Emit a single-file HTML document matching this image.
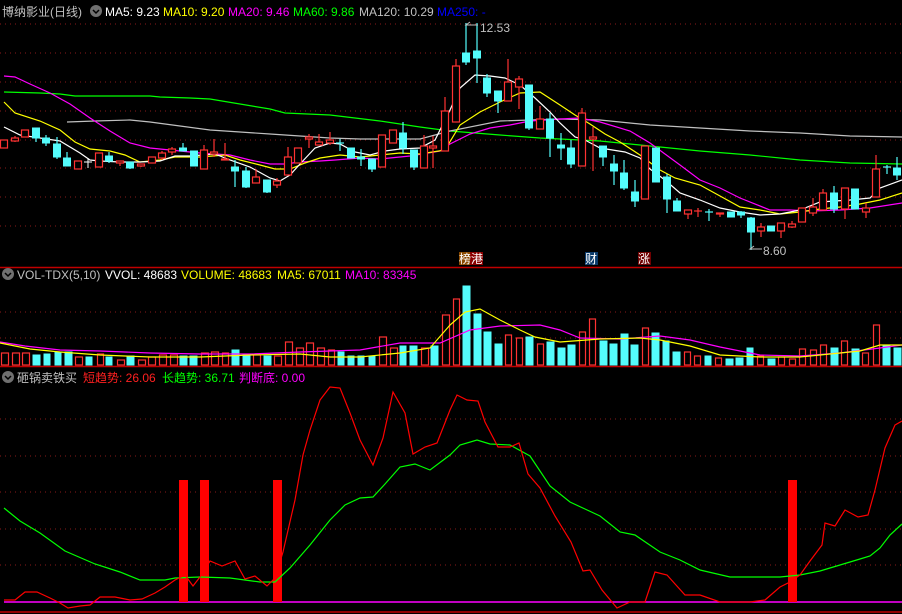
<!DOCTYPE html>
<html><head><meta charset="utf-8"><style>
html,body{margin:0;padding:0;background:#000;}
svg{display:block;}
text{font-family:"Liberation Sans","Noto Sans CJK SC",sans-serif;font-size:12px;}
.r{fill:#000;stroke:#ff3232;stroke-width:1.2}
.c{fill:#54fcfc;stroke:#54fcfc;stroke-width:1}
.wr{stroke:#ff3232;stroke-width:1.2}
.wc{stroke:#54fcfc;stroke-width:1.2}
.dot{stroke:#8a1a1a;stroke-width:1;stroke-dasharray:1 4}
</style></head><body>
<svg width="902" height="614" viewBox="0 0 902 614" xmlns="http://www.w3.org/2000/svg">
<rect width="902" height="614" fill="#000"/>
<!-- grid -->
<g class="dot">
<line x1="0" y1="24" x2="902" y2="24"/><line x1="0" y1="53" x2="902" y2="53"/><line x1="0" y1="82" x2="902" y2="82"/><line x1="0" y1="111" x2="902" y2="111"/><line x1="0" y1="140" x2="902" y2="140"/><line x1="0" y1="168" x2="902" y2="168"/><line x1="0" y1="197" x2="902" y2="197"/><line x1="0" y1="226" x2="902" y2="226"/>
<line x1="0" y1="312" x2="902" y2="312"/><line x1="0" y1="338" x2="902" y2="338"/>
<line x1="0" y1="419" x2="902" y2="419"/><line x1="0" y1="456" x2="902" y2="456"/><line x1="0" y1="492" x2="902" y2="492"/><line x1="0" y1="529" x2="902" y2="529"/><line x1="0" y1="565" x2="902" y2="565"/>
</g>
<line x1="0" y1="267.5" x2="902" y2="267.5" stroke="#c00000" stroke-width="1.5"/>
<line x1="0" y1="366.5" x2="902" y2="366.5" stroke="#c00000" stroke-width="1.5"/>
<line x1="0" y1="612" x2="902" y2="612" stroke="#c00000" stroke-width="1.5"/>

<!-- MA lines -->
<g fill="none" stroke-width="1.2">
<polyline stroke="#00ff00" points="4,92 40,93 60,94 75,96 100,96 150,96 160,97 190,98 210,99 240,104 270,109 285,113 330,115 380,121 420,127 450,131 500,135 540,138 600,141 630,144 700,151 750,155 800,160 850,163 902,164"/>
<polyline stroke="#c0c0c0" points="67,122 95,121 130,120 150,122 180,126 210,130 240,132 270,134 300,136 330,138 360,139 390,139 420,139 450,131 500,121 560,119 600,120 650,125 700,128 750,131 800,133 850,136 902,137"/>
<polyline stroke="#ff00ff" points="4,76 15,77 30,84 50,93 70,104 90,118 110,131 130,143 150,148 170,150 200,153 230,155 250,160 270,164 285,164 300,162 320,161 335,160 360,158 380,159 410,156 440,151 450,144 470,134 490,128 510,125 530,121 560,119 580,118 600,122 630,131 650,143 680,165 700,180 720,188 740,198 770,210 790,210 810,211 840,210 870,208 902,203"/>
<polyline stroke="#ffff00" points="4,102 15,113 40,121 60,130 75,142 90,149 110,151 125,155 140,162 160,160 175,157 200,157 225,155 240,160 260,165 275,169 290,169 305,163 320,158 340,155 360,157 380,155 400,153 420,154 445,150 460,125 480,112 500,102 520,93 540,92 560,105 575,115 590,124 605,134 620,142 640,155 660,170 675,178 700,185 720,196 740,207 760,210 780,214 800,212 820,209 840,207 860,204 880,200 902,193"/>
<polyline stroke="#ffffff" points="4,127 20,135 40,138 60,141 80,153 90,160 100,161 120,162 140,162 160,161 175,156 190,156 215,154 230,160 250,167 270,178 280,181 290,175 300,164 315,148 330,143 340,144 355,152 370,155 385,151 400,149 420,148 435,140 450,110 460,88 475,75 490,76 505,78 520,85 535,98 550,112 560,123 575,137 585,140 600,148 625,152 640,158 650,169 665,180 680,193 700,200 720,208 740,212 760,215 780,214 800,210 820,202 835,201 850,200 870,198 880,188 902,180"/>
</g>

<!-- candles -->
<g>
<rect class="r" x="0.5" y="140" width="7" height="8"/>
<line class="wr" x1="15" y1="136" x2="15" y2="142"/><rect class="r" x="11.5" y="138" width="7" height="3"/>
<rect class="r" x="21.5" y="130" width="7" height="7"/>
<line class="wc" x1="36" y1="128" x2="36" y2="142"/><rect class="c" x="32.5" y="128" width="7" height="10"/>
<line class="wc" x1="46" y1="135" x2="46" y2="146"/><rect class="c" x="42.5" y="138" width="7" height="5"/>
<line class="wc" x1="57" y1="137" x2="57" y2="159"/><rect class="c" x="53.5" y="144" width="7" height="13"/>
<line class="wc" x1="67" y1="152" x2="67" y2="166"/><rect class="c" x="63.5" y="158" width="7" height="8"/>
<rect class="r" x="74.5" y="161" width="7" height="8"/>
<line stroke="#fff" x1="88" y1="158" x2="88" y2="168"/><line stroke="#fff" x1="84" y1="162" x2="92" y2="162"/>
<rect class="r" x="95.5" y="153" width="7" height="14"/>
<line class="wc" x1="109" y1="152" x2="109" y2="163"/><rect class="c" x="105.5" y="156" width="7" height="5"/>
<line class="wr" x1="120" y1="161" x2="120" y2="166"/><rect class="r" x="116.5" y="161" width="7" height="2"/>
<line class="wc" x1="130" y1="162" x2="130" y2="169"/><rect class="c" x="126.5" y="162" width="7" height="6"/>
<line class="wr" x1="141" y1="164" x2="141" y2="167"/><rect class="r" x="137.5" y="164" width="7" height="2"/>
<rect class="r" x="148.5" y="157" width="7" height="6"/>
<line class="wr" x1="162" y1="151" x2="162" y2="160"/><rect class="r" x="158.5" y="153" width="7" height="5"/>
<line class="wr" x1="172" y1="147" x2="172" y2="155"/><rect class="r" x="168.5" y="149" width="7" height="3"/>
<line class="wc" x1="183" y1="143" x2="183" y2="151"/><rect class="c" x="179.5" y="148" width="7" height="3"/>
<rect class="c" x="190.5" y="151" width="7" height="15"/>
<line class="wr" x1="204" y1="145" x2="204" y2="169"/><rect class="r" x="200.5" y="150" width="7" height="19"/>
<line class="wr" x1="214" y1="139" x2="214" y2="157"/><rect class="r" x="210.5" y="152" width="7" height="2"/>
<line class="wr" x1="225" y1="143" x2="225" y2="160"/><rect class="r" x="221.5" y="159" width="7" height="1"/>
<line class="wc" x1="235" y1="160" x2="235" y2="187"/><rect class="c" x="231.5" y="167" width="7" height="4"/>
<line class="wc" x1="246" y1="167" x2="246" y2="188"/><rect class="c" x="242.5" y="171" width="7" height="16"/>
<line class="wr" x1="256" y1="169" x2="256" y2="183"/><rect class="r" x="252.5" y="177" width="7" height="6"/>
<line class="wc" x1="267" y1="180" x2="267" y2="193"/><rect class="c" x="263.5" y="180" width="7" height="12"/>
<line class="wr" x1="277" y1="178" x2="277" y2="188"/><rect class="r" x="273.5" y="181" width="7" height="4"/>
<line class="wr" x1="288" y1="147" x2="288" y2="175"/><rect class="r" x="284.5" y="157" width="7" height="18"/>
<rect class="r" x="294.5" y="148" width="7" height="15"/>
<line class="wr" x1="309" y1="134" x2="309" y2="148"/><rect class="r" x="305.5" y="137" width="7" height="2"/>
<line class="wr" x1="319" y1="134" x2="319" y2="145"/><rect class="r" x="315.5" y="142" width="7" height="3"/>
<line class="wr" x1="330" y1="132" x2="330" y2="145"/><rect class="r" x="326.5" y="140" width="7" height="3"/>
<line class="wc" x1="340" y1="139" x2="340" y2="151"/><line class="wc" x1="336" y1="143" x2="344" y2="143"/>
<rect class="c" x="347.5" y="148" width="7" height="10"/>
<line class="wc" x1="361" y1="149" x2="361" y2="166"/><rect class="c" x="357.5" y="157" width="7" height="2"/>
<line class="wc" x1="372" y1="159" x2="372" y2="172"/><rect class="c" x="368.5" y="159" width="7" height="10"/>
<rect class="r" x="378.5" y="135" width="7" height="32"/>
<rect class="r" x="389.5" y="130" width="7" height="13"/>
<line class="wc" x1="403" y1="122" x2="403" y2="154"/><rect class="c" x="399.5" y="133" width="7" height="15"/>
<line class="wc" x1="414" y1="150" x2="414" y2="170"/><rect class="c" x="410.5" y="150" width="7" height="17"/>
<line class="wr" x1="424" y1="135" x2="424" y2="168"/><rect class="r" x="420.5" y="146" width="7" height="22"/>
<line class="wr" x1="433" y1="136" x2="433" y2="168"/><rect class="r" x="429.5" y="146" width="7" height="2"/>
<line class="wr" x1="445" y1="97" x2="445" y2="151"/><rect class="r" x="441.5" y="111" width="7" height="40"/>
<line class="wr" x1="456" y1="59" x2="456" y2="122"/><rect class="r" x="452.5" y="66" width="7" height="56"/>
<line class="wc" x1="466" y1="23" x2="466" y2="65"/><rect class="c" x="462.5" y="53" width="7" height="9"/>
<line class="wc" x1="477" y1="23" x2="477" y2="83"/><rect class="c" x="473.5" y="51" width="7" height="7"/>
<line class="wc" x1="487" y1="74" x2="487" y2="97"/><rect class="c" x="483.5" y="78" width="7" height="15"/>
<line class="wc" x1="498" y1="91" x2="498" y2="113"/><rect class="c" x="494.5" y="91" width="7" height="10"/>
<line class="wr" x1="508" y1="59" x2="508" y2="101"/><rect class="r" x="504.5" y="82" width="7" height="19"/>
<line class="wr" x1="519" y1="76" x2="519" y2="109"/><rect class="r" x="515.5" y="79" width="7" height="8"/>
<line class="wc" x1="529" y1="85" x2="529" y2="130"/><rect class="c" x="525.5" y="85" width="7" height="43"/>
<line class="wr" x1="540" y1="106" x2="540" y2="129"/><rect class="r" x="536.5" y="119" width="7" height="10"/>
<line class="wc" x1="550" y1="113" x2="550" y2="157"/><rect class="c" x="546.5" y="119" width="7" height="19"/>
<line class="wc" x1="561" y1="133" x2="561" y2="160"/><rect class="c" x="557.5" y="145" width="7" height="3"/>
<line class="wc" x1="571" y1="140" x2="571" y2="168"/><rect class="c" x="567.5" y="148" width="7" height="16"/>
<line class="wr" x1="582" y1="108" x2="582" y2="166"/><rect class="r" x="578.5" y="113" width="7" height="53"/>
<line class="wr" x1="593" y1="127" x2="593" y2="171"/><rect class="r" x="589.5" y="137" width="7" height="2"/>
<line class="wc" x1="603" y1="146" x2="603" y2="166"/><rect class="c" x="599.5" y="146" width="7" height="11"/>
<line class="wc" x1="614" y1="155" x2="614" y2="185"/><rect class="c" x="610.5" y="164" width="7" height="7"/>
<line class="wc" x1="624" y1="160" x2="624" y2="190"/><rect class="c" x="620.5" y="173" width="7" height="15"/>
<line class="wc" x1="635" y1="180" x2="635" y2="207"/><rect class="c" x="631.5" y="192" width="7" height="9"/>
<rect class="r" x="641.5" y="146" width="7" height="53"/>
<rect class="c" x="652.5" y="148" width="7" height="34"/>
<line class="wc" x1="667" y1="174" x2="667" y2="213"/><rect class="c" x="663.5" y="177" width="7" height="22"/>
<line class="wc" x1="677" y1="198" x2="677" y2="211"/><rect class="c" x="673.5" y="201" width="7" height="10"/>
<line class="wr" x1="688" y1="210" x2="688" y2="219"/><rect class="r" x="684.5" y="210" width="7" height="4"/>
<line class="wr" x1="698" y1="208" x2="698" y2="217"/><line class="wr" x1="694" y1="211" x2="702" y2="211"/>
<line class="wc" x1="709" y1="209" x2="709" y2="221"/><line class="wc" x1="705" y1="212" x2="713" y2="212"/>
<line class="wr" x1="720" y1="213" x2="720" y2="217"/><rect class="r" x="716.5" y="213" width="7" height="1"/>
<rect class="c" x="727.5" y="212" width="7" height="5"/>
<line class="wc" x1="741" y1="211" x2="741" y2="218"/><rect class="c" x="737.5" y="212" width="7" height="3"/>
<line class="wc" x1="751" y1="217" x2="751" y2="250"/><rect class="c" x="747.5" y="218" width="7" height="14"/>
<line class="wr" x1="761" y1="223" x2="761" y2="237"/><rect class="r" x="757.5" y="227" width="7" height="4"/>
<rect class="c" x="767.5" y="226" width="7" height="5"/>
<line class="wr" x1="781" y1="223" x2="781" y2="238"/><rect class="r" x="777.5" y="223" width="7" height="8"/>
<line class="wr" x1="792" y1="221" x2="792" y2="228"/><rect class="r" x="788.5" y="224" width="7" height="3"/>
<rect class="r" x="798.5" y="208" width="7" height="14"/>
<line class="wr" x1="813" y1="198" x2="813" y2="216"/><rect class="r" x="809.5" y="207" width="7" height="6"/>
<line class="wr" x1="823" y1="189" x2="823" y2="210"/><rect class="r" x="819.5" y="193" width="7" height="17"/>
<line class="wc" x1="834" y1="186" x2="834" y2="213"/><rect class="c" x="830.5" y="193" width="7" height="16"/>
<line class="wr" x1="845" y1="188" x2="845" y2="219"/><rect class="r" x="841.5" y="188" width="7" height="21"/>
<rect class="c" x="851.5" y="189" width="7" height="20"/>
<line class="wr" x1="866" y1="203" x2="866" y2="218"/><rect class="r" x="862.5" y="208" width="7" height="4"/>
<line class="wr" x1="876" y1="155" x2="876" y2="197"/><rect class="r" x="872.5" y="169" width="7" height="28"/>
<line class="wc" x1="887" y1="165" x2="887" y2="174"/><line class="wc" x1="883" y1="167" x2="891" y2="167"/>
<line class="wc" x1="897" y1="157" x2="897" y2="180"/><rect class="c" x="893.5" y="168" width="7" height="7"/>
</g>

<!-- price labels -->
<path d="M470 22 L466 25 L478 25" stroke="#c0c0c0" fill="none"/>
<text x="480" y="32" fill="#c0c0c0">12.53</text>
<path d="M754 246 L750 249 L762 249" stroke="#c0c0c0" fill="none"/>
<text x="763" y="255" fill="#c0c0c0">8.60</text>
<rect x="459" y="252" width="11" height="13" fill="#8a4a00"/><rect x="470" y="252" width="13" height="13" fill="#8a0000"/>
<text x="459" y="263" fill="#fff" font-size="11">榜港</text>
<rect x="585" y="252" width="13" height="13" fill="#0a3a6a"/><text x="585" y="263" fill="#fff" font-size="11">财</text>
<rect x="638" y="252" width="13" height="13" fill="#700000"/><text x="638" y="263" fill="#fff" font-size="11">涨</text>

<!-- header -->
<text x="2" y="16" fill="#c0c0c0" font-size="13">博纳影业(日线)</text>
<circle cx="96" cy="11" r="6" fill="#707070"/><path d="M93 10 L96 13 L99 10" stroke="#000" stroke-width="1.5" fill="none"/>
<text x="105" y="16" fill="#fff">MA5: 9.23</text>
<text x="163" y="16" fill="#ffff00">MA10: 9.20</text>
<text x="228" y="16" fill="#ff00ff">MA20: 9.46</text>
<text x="293" y="16" fill="#00ff00">MA60: 9.86</text>
<text x="359" y="16" fill="#c0c0c0">MA120: 10.29</text>
<text x="437" y="16" fill="#0000ff">MA250: -</text>

<!-- volume -->
<text x="17" y="279" fill="#c0c0c0">VOL-TDX(5,10)</text>
<circle cx="8" cy="274" r="6" fill="#707070"/><path d="M5 273 L8 276 L11 273" stroke="#000" stroke-width="1.5" fill="none"/>
<text x="105" y="279" fill="#fff">VVOL: 48683</text>
<text x="181" y="279" fill="#ffff00">VOLUME: 48683</text>
<text x="277" y="279" fill="#ffff00">MA5: 67011</text>
<text x="345" y="279" fill="#ff00ff">MA10: 83345</text>
<g>
<rect class="r" x="1.5" y="353" width="7" height="12"/><rect class="r" x="12.5" y="353" width="7" height="12"/><rect class="r" x="22.5" y="353" width="7" height="12"/>
<rect class="c" x="33" y="355" width="7" height="10"/><rect class="c" x="44" y="354" width="6" height="11"/><rect class="c" x="55" y="352" width="6" height="13"/><rect class="c" x="65" y="352" width="7" height="13"/>
<rect class="r" x="75.5" y="357" width="7" height="8"/><rect class="c" x="86" y="357" width="6" height="8"/><rect class="r" x="97.5" y="354" width="6" height="11"/><rect class="c" x="106" y="357" width="6" height="8"/>
<rect class="r" x="117.5" y="360" width="7" height="5"/><rect class="c" x="127" y="356" width="7" height="9"/><rect class="r" x="138.5" y="360" width="7" height="5"/><rect class="r" x="148.5" y="357" width="7" height="8"/>
<rect class="r" x="159.5" y="355" width="7" height="10"/><rect class="r" x="170.5" y="355" width="7" height="10"/><rect class="c" x="180" y="356" width="7" height="9"/><rect class="c" x="190" y="356" width="7" height="9"/>
<rect class="r" x="201.5" y="353" width="7" height="12"/><rect class="r" x="211.5" y="352" width="7" height="13"/><rect class="r" x="222.5" y="353" width="6" height="12"/><rect class="c" x="232" y="350" width="7" height="15"/>
<rect class="c" x="243" y="355" width="7" height="10"/><rect class="r" x="253.5" y="355" width="7" height="10"/><rect class="c" x="264" y="356" width="7" height="9"/><rect class="r" x="274.5" y="356" width="7" height="9"/>
<rect class="r" x="285.5" y="342" width="7" height="23"/><rect class="r" x="296.5" y="348" width="7" height="17"/><rect class="r" x="306.5" y="343" width="7" height="22"/><rect class="r" x="317.5" y="348" width="7" height="17"/>
<rect class="r" x="328.5" y="350" width="6" height="15"/><rect class="c" x="338" y="352" width="6" height="13"/><rect class="c" x="348" y="356" width="6" height="9"/><rect class="c" x="358" y="356" width="6" height="9"/>
<rect class="c" x="369" y="356" width="6" height="9"/><rect class="r" x="379.5" y="337" width="7" height="28"/><rect class="r" x="390.5" y="348" width="7" height="17"/><rect class="c" x="400" y="346" width="6" height="19"/>
<rect class="c" x="410" y="346" width="7" height="19"/><rect class="r" x="421.5" y="348" width="7" height="17"/><rect class="c" x="431" y="346" width="7" height="19"/>
<rect class="r" x="442.5" y="315" width="7" height="50"/><rect class="r" x="453.5" y="299" width="6" height="66"/><rect class="c" x="463" y="286" width="7" height="79"/><rect class="c" x="474" y="314" width="7" height="51"/>
<rect class="c" x="484" y="332" width="7" height="33"/><rect class="c" x="495" y="344" width="7" height="21"/><rect class="r" x="505.5" y="335" width="6" height="30"/><rect class="r" x="516.5" y="338" width="6" height="27"/>
<rect class="c" x="526" y="337" width="7" height="28"/><rect class="r" x="537.5" y="344" width="6" height="21"/><rect class="c" x="547" y="342" width="7" height="23"/><rect class="c" x="558" y="348" width="7" height="17"/>
<rect class="c" x="568" y="345" width="7" height="20"/><rect class="r" x="579.5" y="332" width="6" height="33"/><rect class="r" x="589.5" y="319" width="6" height="46"/><rect class="c" x="600" y="341" width="7" height="24"/>
<rect class="c" x="610" y="344" width="7" height="21"/><rect class="c" x="621" y="334" width="7" height="31"/><rect class="c" x="631" y="345" width="7" height="20"/><rect class="r" x="642.5" y="328" width="6" height="37"/>
<rect class="c" x="652" y="333" width="7" height="32"/><rect class="c" x="663" y="341" width="6" height="24"/><rect class="c" x="673" y="352" width="7" height="13"/><rect class="r" x="684.5" y="352" width="6" height="13"/>
<rect class="r" x="694.5" y="356" width="6" height="9"/><rect class="c" x="705" y="356" width="6" height="9"/><rect class="r" x="715.5" y="358" width="6" height="7"/><rect class="c" x="726" y="359" width="7" height="6"/>
<rect class="c" x="736" y="358" width="7" height="7"/><rect class="c" x="747" y="348" width="6" height="17"/><rect class="r" x="757.5" y="356" width="6" height="9"/><rect class="c" x="768" y="359" width="7" height="6"/>
<rect class="r" x="778.5" y="357" width="6" height="8"/><rect class="r" x="789.5" y="359" width="6" height="6"/><rect class="r" x="799.5" y="349" width="6" height="16"/><rect class="r" x="810.5" y="350" width="6" height="15"/>
<rect class="r" x="820.5" y="345" width="6" height="20"/><rect class="c" x="831" y="348" width="7" height="17"/><rect class="r" x="841.5" y="341" width="6" height="24"/><rect class="c" x="852" y="349" width="7" height="16"/>
<rect class="r" x="862.5" y="353" width="6" height="12"/><rect class="r" x="873.5" y="325" width="6" height="40"/><rect class="c" x="883" y="346" width="7" height="19"/><rect class="c" x="894" y="348" width="7" height="17"/>
</g>
<g fill="none" stroke-width="1.2">
<polyline stroke="#ff00ff" points="0,342 25,346 60,350 100,351 150,353 200,354 250,354 300,352 360,350 400,343 440,343 470,330 500,326 540,325 560,330 580,338 620,339 660,336 690,340 720,347 760,355 800,356 840,353 880,348 902,345"/>
<polyline stroke="#ffff00" points="0,343 30,349 60,352 100,355 150,357 200,357 250,355 300,354 330,357 360,357 400,353 430,348 450,325 465,312 480,309 500,320 520,330 535,337 560,342 600,339 640,338 660,340 690,346 720,355 760,357 800,357 830,354 860,351 880,345 902,345"/>
</g>

<!-- indicator -->
<circle cx="8" cy="377" r="6" fill="#707070"/><path d="M5 376 L8 379 L11 376" stroke="#000" stroke-width="1.5" fill="none"/>
<text x="17" y="382" fill="#c0c0c0">砸锅卖铁买</text>
<text x="83" y="382" fill="#ff2020">短趋势: 26.06</text>
<text x="162" y="382" fill="#00ff00">长趋势: 36.71</text>
<text x="239" y="382" fill="#ff00ff">判断底: 0.00</text>
<line x1="4" y1="602" x2="902" y2="602" stroke="#ff00ff" stroke-width="1.5"/>
<g fill="#ff0000">
<rect x="179" y="480" width="9" height="122"/><rect x="200" y="480" width="9" height="122"/><rect x="273" y="480" width="9" height="122"/><rect x="788" y="480" width="9" height="122"/>
</g>
<g fill="none" stroke-width="1.2">
<polyline stroke="#00ff00" points="4,508 20,521 40,533 65,551 95,564 120,572 140,580 150,580 165,580 175,578 200,577 230,578 260,582 275,582 290,568 310,545 330,520 345,505 360,498 373,497 385,484 400,467 415,464 430,470 450,455 460,445 477,440 490,444 510,445 530,456 550,486 570,502 585,509 600,516 620,532 635,535 660,552 680,560 700,570 730,577 745,577 780,577 800,575 820,571 840,565 860,559 870,556 880,548 890,535 902,524"/>
<polyline stroke="#ff0000" points="4,600 15,600 25,592 37,592 50,598 60,603 68,608 80,606 90,605 100,597 115,597 125,599 130,600 142,599 155,593 165,587 175,580 185,575 193,586 200,577 210,561 222,566 235,561 245,579 255,576 267,586 275,578 283,552 295,500 303,455 310,430 320,400 330,387 340,388 350,413 360,440 373,465 383,438 393,392 405,413 413,454 425,447 437,443 450,410 457,395 467,400 478,401 485,422 498,447 510,447 519,443 528,474 540,488 555,516 571,542 583,571 590,570 602,590 617,608 630,602 645,602 655,572 667,575 685,595 700,595 720,602 735,602 750,602 765,600 780,587 790,582 800,575 810,561 822,545 825,523 835,526 845,510 858,517 868,515 875,490 885,448 895,425 902,421"/>
</g>
</svg>
</body></html>
